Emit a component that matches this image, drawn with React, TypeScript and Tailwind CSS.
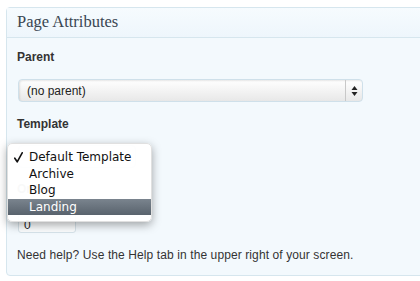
import React from "react";

export default function App() {
  const items = ["Default Template", "Archive", "Blog", "Landing"];
  return (
    <div className="w-[420px] h-[281px] bg-white overflow-hidden relative" style={{ fontFamily: '"Liberation Sans", Arial, sans-serif' }}>
      <div className="ml-[6px] mt-[7px] w-[430px] border border-[#d6e6ee] rounded-[4px] bg-[#f3f9fd]">
        <div className="h-[30px] border-b border-[#d6e6ee] bg-gradient-to-b from-[#f6fbfe] to-[#eef6fc] flex items-center pl-[10px]">
          <span className="text-[16.5px] text-[#3a4652]" style={{ fontFamily: '"Liberation Serif", Georgia, serif' }}>
            Page Attributes
          </span>
        </div>
        <div className="pl-[10px] pt-[11px] pb-[12px]">
          <div className="text-[12px] font-bold text-[#333] h-[16px] leading-[16px]">Parent</div>
          <div className="mt-[14px] w-[345px] h-[23px] rounded-[4px] border border-[#cfe0ea] bg-gradient-to-b from-[#ffffff] to-[#e8e8e8] flex items-center shadow-[inset_1px_1px_2px_rgba(0,0,0,0.1)] ml-[1px]">
            <span className="flex-1 pl-[8px] text-[12px] text-[#222]">(no parent)</span>
            <div className="w-[17px] h-full border-l border-[#c8c8c8] flex items-center justify-center">
              <svg width="7" height="12" viewBox="0 0 7 12">
                <path d="M3.5 1 L6.5 5 L0.5 5 Z" fill="#222" />
                <path d="M3.5 11 L6.5 7 L0.5 7 Z" fill="#222" />
              </svg>
            </div>
          </div>
          <div className="mt-[14px] text-[12px] font-bold text-[#333] h-[16px] leading-[16px]">Template</div>
          <div className="mt-[13px] w-[118px] h-[23px] rounded-[4px] border border-[#cfe0ea] bg-[#f0f0f0] ml-[1px]"></div>
          <div className="mt-[13px] text-[12px] font-bold text-[#333] h-[16px] leading-[16px] opacity-60">Order</div>
          <div className="mt-[13px] w-[58px] h-[23px] rounded-[3px] border border-[#d6e3ea] bg-[#fbfdfe] ml-[1px] pl-[5px] text-[12px] leading-[28px] text-[#222]">0</div>
          <div className="mt-[14px] text-[12px] text-[#333] h-[16px] leading-[16px] tracking-[0.1px]">
            Need help? Use the Help tab in the upper right of your screen.
          </div>
        </div>
      </div>
      <div
        className="absolute left-[7px] top-[143px] w-[145px] pt-[5px] pb-[6px] rounded-[5px] bg-white/95 shadow-[0_3px_10px_rgba(0,0,0,0.35)] border border-[#e0e0e0]"
        style={{ fontFamily: '"DejaVu Sans", "Lucida Grande", sans-serif' }}
      >
        {items.map((it, i) => (
          <div
            key={it}
            className={
              "h-[16.5px] flex items-center text-[12px] " +
              (i === 3 ? "bg-gradient-to-b from-[#7a848e] to-[#59636d] text-white" : "text-[#111]")
            }
          >
            <span className="w-[21px] pl-[6px] flex items-center">
              {i === 0 ? (
                <svg width="9" height="11" viewBox="0 0 9 11">
                  <path d="M0.8 6.2 L3.2 9.8 L8.2 0.8" fill="none" stroke="#111" strokeWidth="1.6" strokeLinecap="round" strokeLinejoin="round" />
                </svg>
              ) : null}
            </span>
            <span>{it}</span>
          </div>
        ))}
      </div>
    </div>
  );
}
